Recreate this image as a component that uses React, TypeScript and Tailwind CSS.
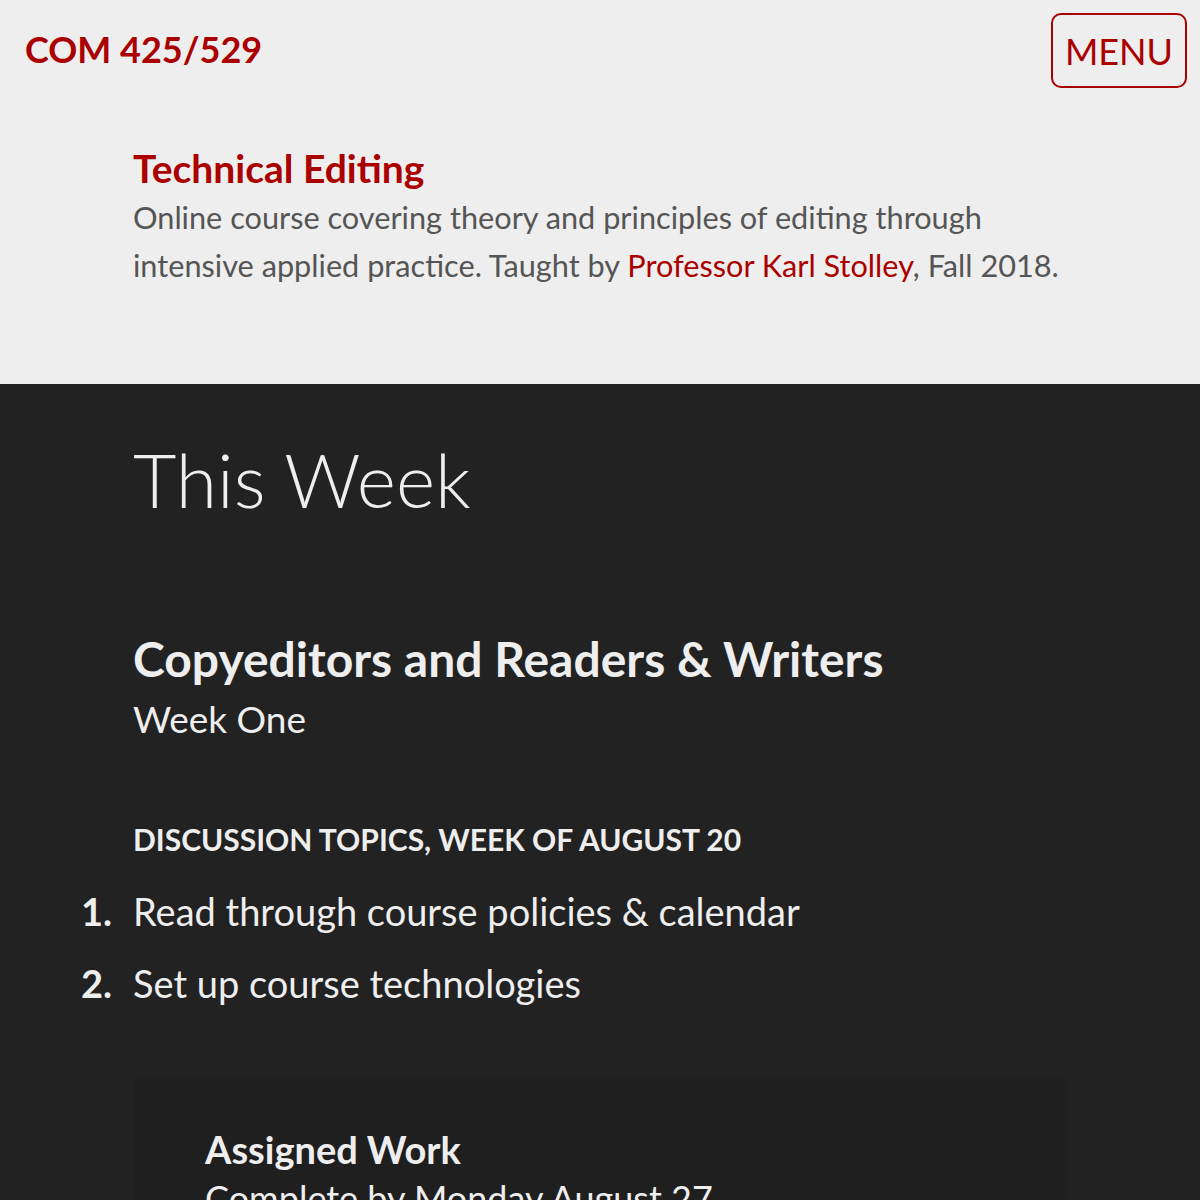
const topics = ["Read through course policies & calendar", "Set up course technologies"];

export default function App() {
  return (
    <div className="min-h-[1200px] bg-[#222222] font-['Lato','Liberation_Sans',sans-serif]">
      <header className="bg-[#eeeeee] h-[384px]">
        <div className="flex justify-between items-start pl-[25px] pr-[13px] pt-[13px]">
          <a className="text-[36px] font-bold text-[#aa0000] leading-none mt-[18px]">COM 425/529</a>
          <button className="border-2 border-[#aa0000] rounded-[10px] w-[136px] h-[75px] text-[#aa0000] text-[36px] leading-none">
            MENU
          </button>
        </div>
        <div className="pl-[133px] pr-[120px] mt-[56px]">
          <h1 className="text-[39px] font-bold text-[#aa0000] leading-[48px]">Technical Editing</h1>
          <p className="text-[30.7px] text-[#555555] leading-[48px] mt-[2px]">
            Online course covering theory and principles of editing through intensive applied practice. Taught by{" "}
            <a className="text-[#aa0000]">Professor Karl Stolley</a>, Fall 2018.
          </p>
        </div>
      </header>
      <main className="text-[#eeeeee] pl-[133px] pr-[132px]">
        <h2 className="text-[75px] font-light leading-none pt-[58px]">This Week</h2>
        <section className="mt-[114px]">
          <h3 className="text-[48px] font-bold leading-[56px]">Copyeditors and Readers &amp; Writers</h3>
          <p className="text-[37px] leading-[52px] mt-[6px]">Week One</p>
          <h4 className="text-[30px] font-bold uppercase mt-[72px] leading-[44px]">Discussion Topics, Week of August 20</h4>
          <ol className="mt-[25px] flex flex-col gap-[22px]">
            {topics.map((t, i) => (
              <li key={i} className="flex text-[38px] leading-[50px] ml-[-52px]">
                <span className="w-[52px] shrink-0 font-bold">{i + 1}.</span>
                <span>{t}</span>
              </li>
            ))}
          </ol>
          <div className="bg-[#1f1f1f] mt-[71px] px-[72px] pt-[47px] pb-[60px]">
            <h4 className="text-[38px] font-bold leading-tight">Assigned Work</h4>
            <p className="text-[36px] leading-tight mt-[2px]">Complete by Monday August 27</p>
          </div>
        </section>
      </main>
    </div>
  );
}
